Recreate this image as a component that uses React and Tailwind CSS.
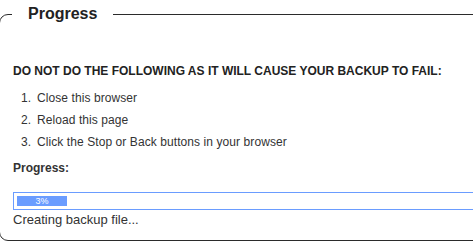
import React from 'react';

const steps = [
  'Close this browser',
  'Reload this page',
  'Click the Stop or Back buttons in your browser',
];

const ProgressBar = ({ percent }) => (
  <div className="border border-[#6a9cff] h-[18px] w-[480px] p-[3px] flex items-center">
    <div
      className="h-[10px] bg-[#6a9cff] flex items-center justify-center text-white text-[9px] leading-none"
      style={{ width: 50 }}
    >
      {percent}%
    </div>
  </div>
);

export default function App() {
  return (
    <div className="w-[473px] h-[248px] overflow-hidden bg-white font-['Liberation_Sans',Arial,sans-serif] text-[#333]">
      <fieldset className="mt-[5px] w-[520px] h-[236px] border border-[#2b2b2b] rounded-l-[9px] pl-[12px] pr-0 pt-0 pb-0 -ml-[1px]">
        <legend className="px-[16px] text-[16px] font-bold text-[#222] leading-[18px]">Progress</legend>
        <div className="pt-[41px] pl-[1px]">
          <p className="text-[12px] font-bold text-[#222] leading-[14px]">
            DO NOT DO THE FOLLOWING AS IT WILL CAUSE YOUR BACKUP TO FAIL:
          </p>
          <ol className="mt-[13px] flex flex-col gap-[8px]">
            {steps.map((s, i) => (
              <li key={s} className="text-[12px] leading-[14px] tracking-[0.08px] pl-[8px] flex">
                <span className="w-[16px]">{i + 1}.</span>
                <span>{s}</span>
              </li>
            ))}
          </ol>
          <p className="mt-[12px] text-[12px] font-bold text-[#333] leading-[14px]">Progress:</p>
          <div className="mt-[17px]">
            <ProgressBar percent={3} />
          </div>
          <p className="mt-[2px] text-[13px] text-[#333] leading-[15px]">Creating backup file...</p>
        </div>
      </fieldset>
    </div>
  );
}
